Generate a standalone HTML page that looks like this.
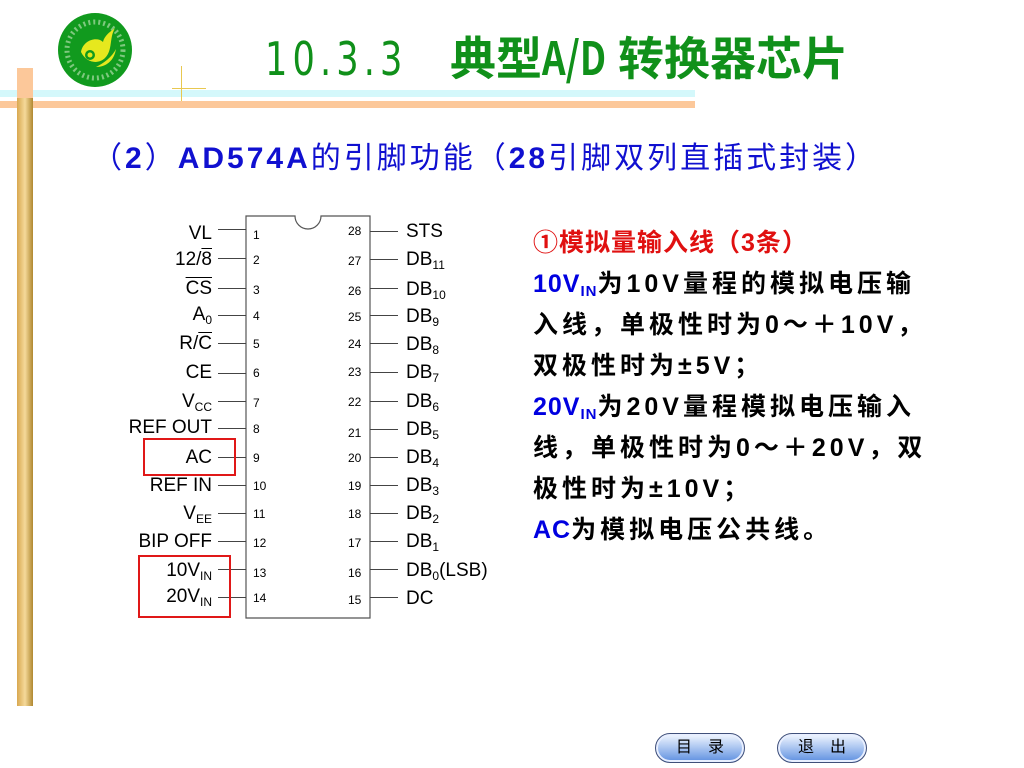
<!DOCTYPE html>
<html><head><meta charset="utf-8"><style>
body{margin:0;width:1024px;height:768px;background:#fff;position:relative;overflow:hidden;font-family:"Liberation Sans","Noto Sans CJK SC",sans-serif}
.a{position:absolute;white-space:nowrap}
.ll{position:absolute;width:190px;text-align:right;font-size:19px;line-height:20px;color:#000}
.rl{position:absolute;font-size:19px;line-height:20px;color:#000}
.n{position:absolute;font-size:12px;line-height:12px;color:#000}
.ln{position:absolute;height:1px;width:28px;background:#444}
sub{font-size:12px;vertical-align:-4px;line-height:0}
.t{font-size:25px;font-weight:bold;color:#000;letter-spacing:4px}
.t b{color:#0000e0;letter-spacing:1px}
.btn{position:absolute;width:88px;height:28px;border-radius:15px;border:1px solid #40507a;background:linear-gradient(#f4f8ff,#a9c4f0 50%,#5d8fe0);box-shadow:inset 0 0 0 2px #e8efff;font-size:16px;text-align:center;line-height:28px;letter-spacing:16px;text-indent:16px;color:#000}
</style></head><body>
<svg class="a" style="left:56px;top:12px" width="78" height="76" viewBox="0 0 78 76">
<circle cx="39" cy="38" r="37" fill="#119a1e"/>
<circle cx="39" cy="38" r="28" fill="none" stroke="#7fc87f" stroke-width="5" stroke-dasharray="2 3"/>
<path d="M25 40c2-12 16-16 22-10 2-8 10-12 12-14-6 10-2 22-10 30-6 6-18 6-24-6z" fill="#e6e81e"/>
<circle cx="34" cy="43" r="5" fill="#119a1e"/><circle cx="34" cy="43" r="2.5" fill="#e6e81e"/>
<path d="M40 55c10 0 18-6 20-18-4 8-12 14-20 18z" fill="#e6e81e"/>
</svg>
<div class="a" style="left:0;top:90px;width:695px;height:7px;background:#d4f8fb"></div>
<div class="a" style="left:0;top:101px;width:695px;height:7px;background:#fcc89a"></div>
<div class="a" style="left:181px;top:66px;width:1px;height:35px;background:#e8c850"></div>
<div class="a" style="left:172px;top:88px;width:34px;height:1px;background:#e8c850"></div>
<div class="a" style="left:17px;top:68px;width:16px;height:638px;background:linear-gradient(90deg,#d8a850,#f5d99a 50%,#b08830);"></div>
<div class="a" style="left:17px;top:68px;width:16px;height:30px;background:#fcc89a"></div>
<div class="a" style="left:265px;top:28px;font-size:46px;line-height:56px;font-weight:bold;color:#10901a;font-family:'Noto Sans CJK SC',sans-serif"><span style="display:inline-block;transform:scaleX(.85);transform-origin:left;font-family:'DejaVu Sans Condensed','Liberation Sans Narrow',sans-serif;font-weight:normal;letter-spacing:6px;width:185px">10.3.3</span>典型<span style="display:inline-block;transform:scaleX(.8);transform-origin:left;width:76px">A/D</span>转换器芯片</div>
<div class="a" style="left:92px;top:136px;font-size:30px;line-height:38px;color:#1010d0;letter-spacing:3px"><span style="font-family:'Noto Sans CJK SC'">（</span><b>2</b><span style="font-family:'Noto Sans CJK SC'">）</span><b>AD574A</b>的引脚功能（<b>28</b>引脚双列直插式封装）</div>
<svg class="a" style="left:245px;top:215px" width="127" height="405">
<path d="M1 1H50A13 13 0 0 0 76 1H125V403H1Z" fill="none" stroke="#555" stroke-width="1.2"/>
</svg>
<div class="ll" style="left:22px;top:224px">VL</div>
<div class="ll" style="left:22px;top:250px">12/<span style="text-decoration:overline">8</span></div>
<div class="ll" style="left:22px;top:279px;text-decoration:overline">CS</div>
<div class="ll" style="left:22px;top:305px">A<sub>0</sub></div>
<div class="ll" style="left:22px;top:334px">R/<span style="text-decoration:overline">C</span></div>
<div class="ll" style="left:22px;top:363px">CE</div>
<div class="ll" style="left:22px;top:392px">V<sub>CC</sub></div>
<div class="ll" style="left:22px;top:418px">REF OUT</div>
<div class="ll" style="left:22px;top:448px">AC</div>
<div class="ll" style="left:22px;top:476px">REF IN</div>
<div class="ll" style="left:22px;top:504px">V<sub>EE</sub></div>
<div class="ll" style="left:22px;top:532px">BIP OFF</div>
<div class="ll" style="left:22px;top:561px">10V<sub>IN</sub></div>
<div class="ll" style="left:22px;top:587px">20V<sub>IN</sub></div>
<div class="ln" style="left:218px;top:229px"></div><div class="ln" style="left:218px;top:258px"></div><div class="ln" style="left:218px;top:288px"></div><div class="ln" style="left:218px;top:315px"></div><div class="ln" style="left:218px;top:343px"></div><div class="ln" style="left:218px;top:373px"></div><div class="ln" style="left:218px;top:401px"></div><div class="ln" style="left:218px;top:428px"></div><div class="ln" style="left:218px;top:457px"></div><div class="ln" style="left:218px;top:485px"></div><div class="ln" style="left:218px;top:513px"></div><div class="ln" style="left:218px;top:541px"></div><div class="ln" style="left:218px;top:569px"></div><div class="ln" style="left:218px;top:597px"></div>
<div class="ln" style="left:370px;top:231px"></div><div class="ln" style="left:370px;top:259px"></div><div class="ln" style="left:370px;top:288px"></div><div class="ln" style="left:370px;top:315px"></div><div class="ln" style="left:370px;top:343px"></div><div class="ln" style="left:370px;top:372px"></div><div class="ln" style="left:370px;top:401px"></div><div class="ln" style="left:370px;top:429px"></div><div class="ln" style="left:370px;top:457px"></div><div class="ln" style="left:370px;top:485px"></div><div class="ln" style="left:370px;top:513px"></div><div class="ln" style="left:370px;top:541px"></div><div class="ln" style="left:370px;top:569px"></div><div class="ln" style="left:370px;top:597px"></div>
<div class="n" style="left:253px;top:229px">1</div><div class="n" style="left:253px;top:254px">2</div><div class="n" style="left:253px;top:284px">3</div><div class="n" style="left:253px;top:310px">4</div><div class="n" style="left:253px;top:338px">5</div><div class="n" style="left:253px;top:367px">6</div><div class="n" style="left:253px;top:397px">7</div><div class="n" style="left:253px;top:423px">8</div><div class="n" style="left:253px;top:452px">9</div><div class="n" style="left:253px;top:480px">10</div><div class="n" style="left:253px;top:508px">11</div><div class="n" style="left:253px;top:537px">12</div><div class="n" style="left:253px;top:567px">13</div><div class="n" style="left:253px;top:592px">14</div>
<div class="n" style="left:348px;top:225px">28</div><div class="n" style="left:348px;top:255px">27</div><div class="n" style="left:348px;top:285px">26</div><div class="n" style="left:348px;top:311px">25</div><div class="n" style="left:348px;top:338px">24</div><div class="n" style="left:348px;top:366px">23</div><div class="n" style="left:348px;top:396px">22</div><div class="n" style="left:348px;top:427px">21</div><div class="n" style="left:348px;top:452px">20</div><div class="n" style="left:348px;top:480px">19</div><div class="n" style="left:348px;top:508px">18</div><div class="n" style="left:348px;top:537px">17</div><div class="n" style="left:348px;top:567px">16</div><div class="n" style="left:348px;top:594px">15</div>
<div class="rl" style="left:406px;top:222px">STS</div>
<div class="rl" style="left:406px;top:250px">DB<sub>11</sub></div>
<div class="rl" style="left:406px;top:280px">DB<sub>10</sub></div>
<div class="rl" style="left:406px;top:307px">DB<sub>9</sub></div>
<div class="rl" style="left:406px;top:335px">DB<sub>8</sub></div>
<div class="rl" style="left:406px;top:363px">DB<sub>7</sub></div>
<div class="rl" style="left:406px;top:392px">DB<sub>6</sub></div>
<div class="rl" style="left:406px;top:420px">DB<sub>5</sub></div>
<div class="rl" style="left:406px;top:448px">DB<sub>4</sub></div>
<div class="rl" style="left:406px;top:476px">DB<sub>3</sub></div>
<div class="rl" style="left:406px;top:504px">DB<sub>2</sub></div>
<div class="rl" style="left:406px;top:532px">DB<sub>1</sub></div>
<div class="rl" style="left:406px;top:561px">DB<sub>0</sub>(LSB)</div>
<div class="rl" style="left:406px;top:589px">DC</div>
<div class="a" style="left:143px;top:438px;width:89px;height:34px;border:2px solid #e01818"></div>
<div class="a" style="left:138px;top:555px;width:89px;height:59px;border:2px solid #e01818"></div>
<div class="a t" style="left:533px;top:223px;line-height:41px">
<div style="color:#e01010;letter-spacing:1px">①模拟量输入线（3条）</div>
<div><b>10V<sub style="font-size:15px">IN</sub></b>为10V量程的模拟电压输</div>
<div>入线，单极性时为0～＋10V，</div>
<div>双极性时为±5V；</div>
<div><b>20V<sub style="font-size:15px">IN</sub></b>为20V量程模拟电压输入</div>
<div>线，单极性时为0～＋20V，双</div>
<div>极性时为±10V；</div>
<div><b>AC</b>为模拟电压公共线。</div>
</div>
<div class="btn" style="left:655px;top:733px">目录</div>
<div class="btn" style="left:777px;top:733px">退出</div>
</body></html>
